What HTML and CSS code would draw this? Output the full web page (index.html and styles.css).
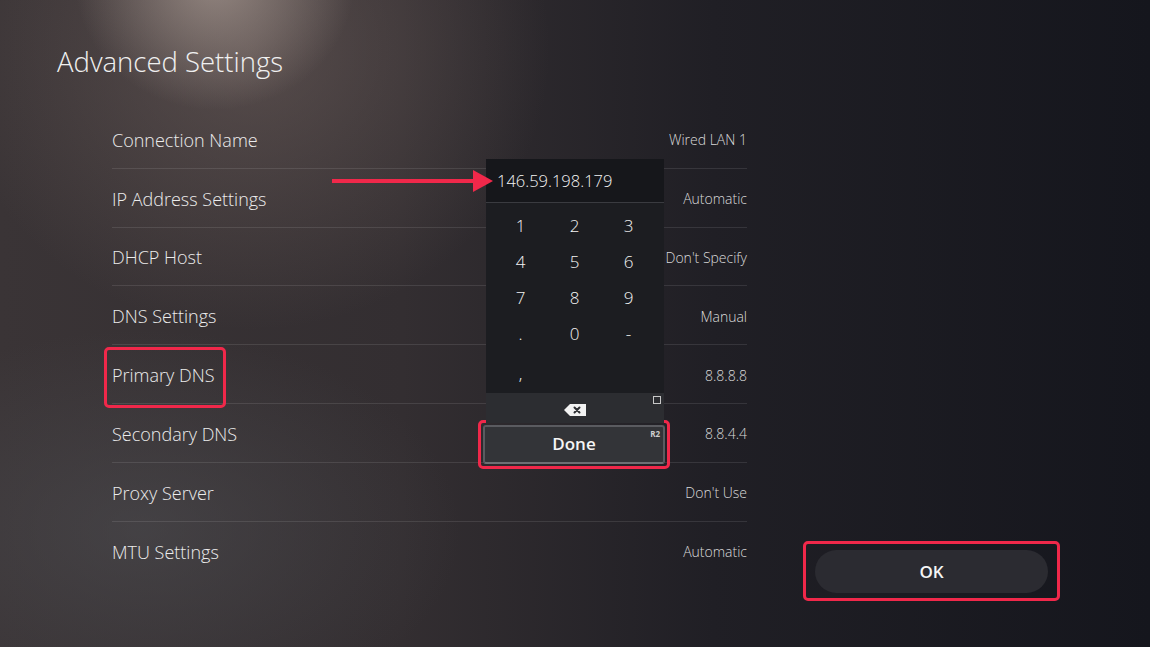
FILE: index.html
```html
<!DOCTYPE html>
<html>
<head>
<meta charset="utf-8">
<link rel="stylesheet" href="styles.css">
</head>
<body>
<div class="screen">
  <h1 class="title">Advanced Settings</h1>
  <div class="content">
    <div class="list">
      <div class="row"><span class="label">Connection Name</span><span class="value">Wired LAN 1</span></div>
      <div class="row"><span class="label">IP Address Settings</span><span class="value">Automatic</span></div>
      <div class="row"><span class="label">DHCP Host</span><span class="value">Don't Specify</span></div>
      <div class="row"><span class="label">DNS Settings</span><span class="value">Manual</span></div>
      <div class="row"><span class="label hl">Primary DNS</span><span class="value">8.8.8.8</span></div>
      <div class="row"><span class="label">Secondary DNS</span><span class="value">8.8.4.4</span></div>
      <div class="row"><span class="label">Proxy Server</span><span class="value">Don't Use</span></div>
      <div class="row last"><span class="label">MTU Settings</span><span class="value">Automatic</span></div>
    </div>
    <div class="side">
      <div class="ok-frame"><button class="ok">OK</button></div>
    </div>
  </div>

  <div class="arrow">
    <div class="arrow-line"></div>
    <div class="arrow-head"></div>
  </div>

  <div class="keypad">
    <div class="kp-input">146.59.198.179</div>
    <div class="kp-keys">
      <span>1</span><span>2</span><span>3</span>
      <span>4</span><span>5</span><span>6</span>
      <span>7</span><span>8</span><span>9</span>
      <span>.</span><span>0</span><span>-</span>
      <span class="comma">,</span><span></span><span></span>
    </div>
    <div class="kp-back">
      <span class="sq"></span>
      <svg class="bs" width="22" height="12" viewBox="0 0 22 12">
        <path d="M6 0H22V12H6L0 6Z" fill="#f2f2f2"/>
        <path d="M10.5 3.5L15.5 8.5M15.5 3.5L10.5 8.5" stroke="#2d2e32" stroke-width="2" stroke-linecap="round"/>
      </svg>
    </div>
    <div class="done-frame">
      <div class="done">Done<span class="r2">R2</span></div>
    </div>
  </div>
</div>
</body>
</html>
```

FILE: styles.css
```css
* { box-sizing: border-box; }
html, body { margin: 0; padding: 0; }
body {
  width: 1150px;
  height: 647px;
  overflow: hidden;
  font-family: "Open Sans", "Noto Sans", sans-serif;
  color: #e6e6e6;
}
.screen {
  position: relative;
  width: 1150px;
  height: 647px;
  background:
    radial-gradient(ellipse 140px 130px at 215px -20px, rgba(175,160,152,0.7), rgba(175,160,152,0) 100%),
    radial-gradient(ellipse 300px 280px at 250px 50px, rgba(120,104,100,0.5), rgba(120,104,100,0) 100%),
    radial-gradient(ellipse 320px 200px at 140px 530px, rgba(78,78,82,0.55), rgba(78,78,82,0) 100%),
    linear-gradient(90deg, #3a3436 0%, #332e31 35%, #201f25 62%, #15161d 100%);
  padding: 45px 0 0 57px;
}
.title {
  margin: 0;
  font-weight: 300;
  font-size: 27.5px;
  line-height: 34px;
  color: #f0f0f0;
}
.content {
  display: flex;
  margin-top: 31px;
  padding-left: 55px;
}
.list {
  width: 635px;
  display: flex;
  flex-direction: column;
}
.row {
  height: 58.8px;
  display: flex;
  align-items: center;
  justify-content: space-between;
  border-bottom: 1px solid rgba(255,255,255,0.1);
}
.row.last { border-bottom: none; }
.label {
  font-size: 18px;
  font-weight: 300;
  color: #ececec;
  position: relative;
  top: 1px;
}
.label.hl::after {
  content: "";
  position: absolute;
  left: -8px;
  top: -16px;
  right: -11px;
  bottom: -21px;
  border: 3px solid #f0284a;
  border-radius: 5px;
}
.value {
  font-size: 14px;
  font-weight: 300;
  color: #dadada;
  position: relative;
  top: 1px;
}
.side {
  flex: 1;
  display: flex;
  align-items: flex-end;
  padding-left: 56px;
}
.ok-frame {
  width: 257px;
  height: 60px;
  border: 3px solid #f0284a;
  border-radius: 5px;
  padding: 6px 9px 5px 9px;
  margin-bottom: -21px;
}
.ok {
  width: 100%;
  height: 100%;
  border: none;
  border-radius: 22px;
  background: #2b2b31;
  color: #f5f5f5;
  font-family: "Open Sans", "Noto Sans", sans-serif;
  font-weight: 600;
  font-size: 17px;
  padding: 0;
}

/* arrow overlay */
.arrow {
  position: absolute;
  left: 332px;
  top: 169px;
  display: flex;
  align-items: center;
  height: 23px;
  z-index: 2;
}
.arrow-line {
  width: 141px;
  height: 4px;
  background: #f0284a;
}
.arrow-head {
  width: 0;
  height: 0;
  border-top: 11.5px solid transparent;
  border-bottom: 11.5px solid transparent;
  border-left: 20px solid #f0284a;
}

/* keypad overlay */
.keypad {
  position: absolute;
  left: 486px;
  top: 159px;
  width: 178px;
  display: flex;
  flex-direction: column;
  z-index: 1;
}
.kp-input {
  height: 44px;
  background: #16171b;
  border-bottom: 1px solid #3a3b40;
  padding-left: 11px;
  font-size: 16.5px;
  font-weight: 300;
  line-height: 43px;
  color: #f4f4f4;
}
.kp-keys {
  background: #1c1d21;
  height: 190px;
  padding: 4px 8px 5px 7px;
  display: grid;
  grid-template-columns: repeat(3, 54px);
  grid-auto-rows: 36px;
  justify-content: center;
}
.kp-keys span {
  display: flex;
  align-items: center;
  justify-content: center;
  font-size: 17px;
  font-weight: 300;
  color: #f4f4f4;
}
.kp-keys .comma { padding-top: 8px; }
.kp-back {
  position: relative;
  height: 30px;
  background: #2c2d31;
  display: flex;
  align-items: center;
  justify-content: center;
  padding-top: 4px;
}
.sq {
  position: absolute;
  right: 3px;
  top: 3px;
  width: 8px;
  height: 8px;
  border: 1px solid #c8c8c8;
}
.done-frame {
  margin: -3px -6px 0 -8px;
  border: 3px solid #f0284a;
  border-radius: 5px;
  padding: 2px;
}
.done {
  position: relative;
  height: 39px;
  background: #333438;
  border: 2px solid #5a5b60;
  border-bottom-color: #6e6f74;
  border-radius: 3px;
  display: flex;
  align-items: center;
  justify-content: center;
  font-size: 17px;
  font-weight: 600;
  color: #f5f5f5;
  padding-bottom: 2px;
}
.r2 {
  position: absolute;
  right: 3px;
  top: 1px;
  font-size: 8px;
  font-weight: 700;
  color: #cfcfcf;
}
```
